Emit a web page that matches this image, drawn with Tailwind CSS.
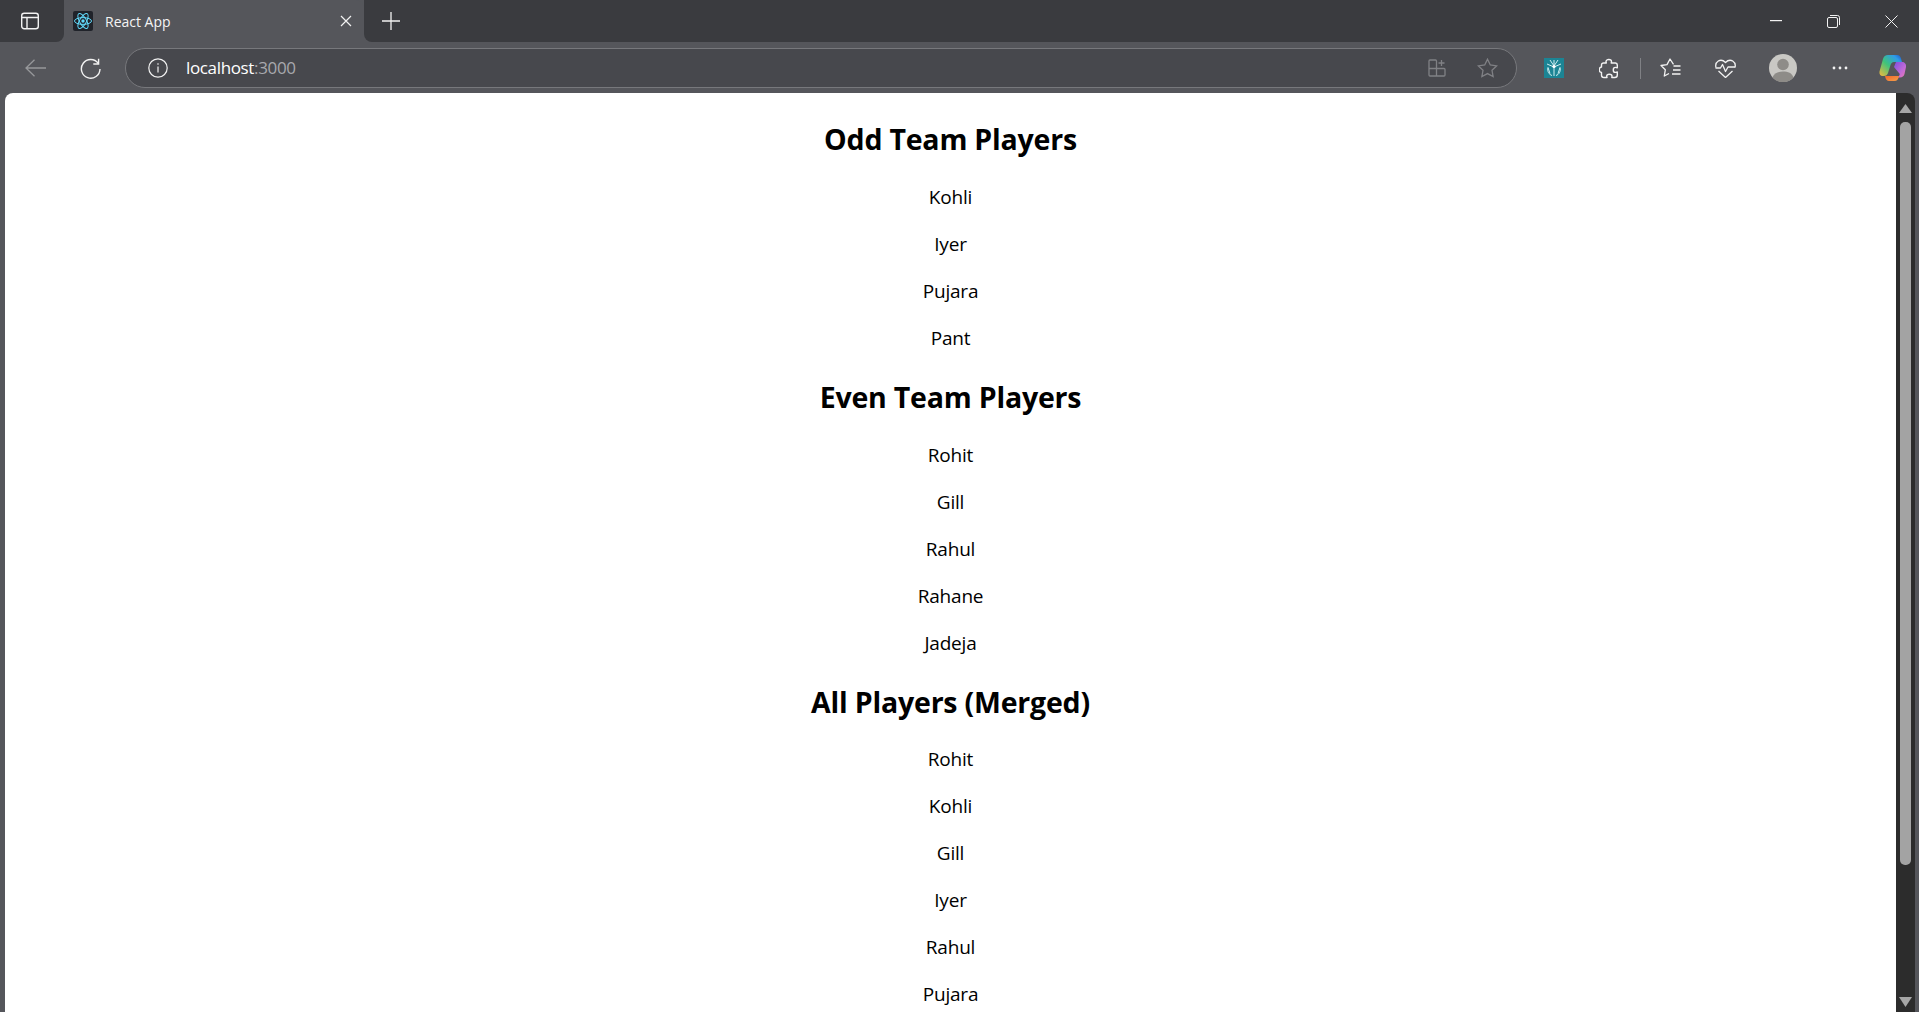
<!DOCTYPE html>
<html lang="en">
<head>
    <meta charset="UTF-8">
    <title>React App</title>
    <script src="https://cdn.jsdelivr.net/npm/@tailwindcss/browser@4"></script>
</head>
<body class="h-screen overflow-hidden bg-[#55565b] font-['Open_Sans',sans-serif]">
    <!-- Tab strip -->
    <div class="flex h-[42px] bg-[#55565b]">
        <div class="w-[64px] flex items-center justify-center pr-[4px] bg-[#3a3b3f] rounded-br-lg">
            <svg class="w-[20px] h-[20px]" viewBox="0 0 20 20" fill="none" stroke="#f2f2f2" stroke-width="1.4"><rect x="1.7" y="2.2" width="16.6" height="15.6" rx="2.5"/><path d="M2 6.5h16M7 6.5v11"/></svg>
        </div>
        <div class="w-[300px] flex items-center bg-[#55565b] rounded-t-lg pl-[9px] pr-[12px]">
            <svg class="w-[20px] h-[20px] shrink-0" viewBox="0 0 20 20"><rect width="20" height="20" rx="2" fill="#20232a"/><g fill="none" stroke="#61dafb" stroke-width="1"><ellipse cx="10" cy="10" rx="8.5" ry="3.4"/><ellipse cx="10" cy="10" rx="8.5" ry="3.4" transform="rotate(60 10 10)"/><ellipse cx="10" cy="10" rx="8.5" ry="3.4" transform="rotate(120 10 10)"/></g><circle cx="10" cy="10" r="1.7" fill="#61dafb"/></svg>
            <span class="ml-[12px] text-[14px] text-[#f4f4f5] flex-1">React App</span>
            <svg class="w-[12px] h-[12px]" viewBox="0 0 12 12" stroke="#f2f2f2" stroke-width="1.2"><path d="M1 1l10 10M11 1L1 11"/></svg>
        </div>
        <div class="flex-1 flex items-center bg-[#3a3b3f] rounded-bl-lg">
            <svg class="ml-[18px] w-[18px] h-[18px]" viewBox="0 0 18 18" stroke="#f2f2f2" stroke-width="1.3"><path d="M9 0v18M0 9h18"/></svg>
            <div class="ml-auto flex items-center">
                <div class="w-[57px] flex justify-center pr-[1px]"><svg class="w-[12px] h-[2px]" viewBox="0 0 12 2"><rect width="12" height="1.2" fill="#f2f2f2"/></svg></div>
                <div class="w-[58px] flex justify-center pr-[1px]"><svg class="w-[13px] h-[13px]" viewBox="0 0 13 13" fill="none" stroke="#f2f2f2" stroke-width="1"><rect x="0.5" y="2.5" width="10" height="10" rx="1.5"/><path d="M3 .5h7.5a2 2 0 0 1 2 2V10"/></svg></div>
                <div class="w-[56px] flex justify-center"><svg class="w-[13px] h-[13px]" viewBox="0 0 13 13" stroke="#f2f2f2" stroke-width="1"><path d="M.5.5l12 12M12.5.5l-12 12"/></svg></div>
            </div>
        </div>
    </div>

    <!-- Toolbar -->
    <div class="flex items-center h-[51px] pt-[1px] pr-[4px]">
        <div class="ml-[14px] w-[42px] flex justify-center">
            <svg class="w-[21px] h-[18px]" viewBox="0 0 21 18" fill="none" stroke="#97989b" stroke-width="1.3"><path d="M21 9H1M9.5.8L1 9l8.5 8.2"/></svg>
        </div>
        <div class="ml-[13px] w-[42px] flex justify-center">
            <svg class="w-[21px] h-[21px]" viewBox="0 0 21 21" fill="none" stroke="#f2f2f2" stroke-width="1.4"><path d="M18.3 5.5A9.3 9.3 0 1 0 20 11"/><path d="M18.6.8v5.2h-5.3"/></svg>
        </div>
        <div class="ml-[14px] flex-1 h-[40px] flex items-center rounded-[20px] border border-[#77787c] bg-[#47484d]">
            <svg class="ml-[22px] w-[20px] h-[20px]" viewBox="0 0 20 20" fill="none" stroke="#f2f2f2" stroke-width="1.2"><circle cx="10" cy="10" r="9.2"/><path d="M10 8.6v6M10 5.2v1.6"/></svg>
            <span class="ml-[18px] text-[17px] tracking-[-0.35px] text-white">localhost<span class="text-[#a8a9ad]">:3000</span></span>
            <svg class="ml-auto w-[18px] h-[18px]" viewBox="0 0 18 18" fill="none" stroke="#808185" stroke-width="1.3"><path d="M1 9.5h7.5V2a1 1 0 0 0-1-1H2a1 1 0 0 0-1 1zM1 9.5V16a1 1 0 0 0 1 1h5.5a1 1 0 0 0 1-1V9.500zM8.500 9.500H16a1 1 0 0 1 1 1V16a1 1 0 0 1-1 1H8.500M13.500 1v6M10.500 4h6"/></svg>
            <svg class="ml-[31px] mr-[18px] w-[21px] h-[20px]" viewBox="0 0 21 20" fill="none" stroke="#808185" stroke-width="1.3"><path d="M10.500 1.200l2.800 5.800 6.300.9-4.600 4.400 1.100 6.300-5.600-3-5.600 3 1.100-6.300-4.600-4.400 6.300-.9z"/></svg>
        </div>
        <div class="ml-[15px] w-[44px] flex justify-center">
            <svg class="w-[20px] h-[20px]" viewBox="0 0 20 20"><rect width="20" height="20" fill="#1c8494"/><g fill="none" stroke="#cfeef0" stroke-width="1"><path d="M10 2v16M6 2l4 6 4-6M3 6l7 3 7-3M4 9.500c-1 4 1 7 4 8M16 9.500c1 4-1 7-4 8M4 9.500l2 6M16 9.500l-2 6"/></g><circle cx="10" cy="8.500" r="1.600" fill="#fff"/></svg>
        </div>
        <div class="ml-[11px] w-[44px] flex justify-center">
            <svg class="w-[20px] h-[21px]" viewBox="0 0 20 21" fill="none" stroke="#f2f2f2" stroke-width="1.4" stroke-linejoin="round"><path d="M7 3.500C7 .8 12.500 .8 12.500 3.500c0 .8-.3 1-.3 1.500h4.300a2 2 0 0 1 1.800 2v2.800c-.6 0-1-.4-2-.4-2.700 0-2.700 5 0 5 1 0 1.400-.4 2-.4V17a2.500 2.500 0 0 1-2.500 2.500h-3c0-.5.200-.7.200-1.300 0-2.700-5.300-2.700-5.300 0 0 .6.300.8.300 1.300H5a2.500 2.500 0 0 1-2.500-2.500v-2.600c-3-.2-3-5.200 0-5.400V7a2 2 0 0 1 2-2h2.800c0-.5-.3-.7-.3-1.500z"/></svg>
        </div>
        <div class="ml-[9px] w-[1px] h-[21px] bg-[#808185]"></div>
        <div class="ml-[7px] w-[44px] flex justify-center">
            <svg class="w-[21px] h-[20px]" viewBox="0 0 21 20" fill="none" stroke="#f2f2f2" stroke-width="1.3" stroke-linejoin="round"><path d="M13.500 6.300L10 1 7 6.600l-6 .9 4.300 4.300-1 6.200 4.700-2.500"/><path d="M13.500 8h7M13 12h7.500M12 16h8.500"/></svg>
        </div>
        <div class="ml-[11px] w-[44px] flex justify-center">
            <svg class="w-[21px] h-[20px]" viewBox="0 0 21 20" fill="none" stroke="#f2f2f2" stroke-width="1.3" stroke-linejoin="round"><path d="M1 9.500C-.5 4 5.500-.5 10.500 4.500 15.500-.5 21.500 4 20 9.500M3.500 13l7 6.500 7-6.500"/><path d="M.5 10h5l2-3.500 3 7 2.500-4.500h7"/></svg>
        </div>
        <div class="ml-[14px] w-[44px] flex justify-center">
            <svg class="w-[28px] h-[28px]" viewBox="0 0 28 28"><circle cx="14" cy="14" r="14" fill="#c9c8c4"/><circle cx="14" cy="10.500" r="5.800" fill="#8e8c88"/><path d="M3.500 23.500C5 19 9 17.500 14 17.500s9 1.500 10.500 6A14 14 0 0 1 3.500 23.500z" fill="#8e8c88"/></svg>
        </div>
        <div class="ml-[13px] w-[44px] flex justify-center">
            <svg class="w-[16px] h-[4px]" viewBox="0 0 16 4" fill="#f2f2f2"><circle cx="2" cy="2" r="1.400"/><circle cx="8" cy="2" r="1.400"/><circle cx="14" cy="2" r="1.400"/></svg>
        </div>
        <div class="ml-[9px] w-[44px] flex justify-center">
            <svg class="w-[28px] h-[28px]" viewBox="0 0 28 28">
                <defs>
                    <linearGradient id="cpA" x1="0" y1="1" x2="1" y2="0"><stop offset="0" stop-color="#f5b83d"/><stop offset="0.45" stop-color="#3fc47a"/><stop offset="0.8" stop-color="#2f9be8"/><stop offset="1" stop-color="#1c4fc4"/></linearGradient>
                    <linearGradient id="cpB" x1="0" y1="0" x2="1" y2="1"><stop offset="0" stop-color="#7d4fe0"/><stop offset="0.6" stop-color="#c06ad8"/><stop offset="1" stop-color="#ee7ab0"/></linearGradient>
                    <linearGradient id="cpC" x1="0" y1="0" x2="1" y2="1"><stop offset="0" stop-color="#f2682a"/><stop offset="1" stop-color="#f4a04a"/></linearGradient>
                </defs>
                <path d="M9 1h9c2.500 0 3.500 1.800 4 3.500l1 3.500H15c-2 0-3 1.500-3.500 3L9 19c-.6 1.800-2 3-4 3H3.500C1.500 22 0 20 .5 17.500L4 5C4.800 2.500 6.500 1 9 1z" fill="url(#cpA)"/>
                <path d="M17 8h6c2.500 0 4.500 2 4 5l-1.500 7c-.5 2.200-2.200 3.500-4.500 3.500h-4c2 0 3.300-1.500 3.800-3.500L15 13z" fill="url(#cpB)"/>
                <path d="M6 22h10l4 0c-.5 3-2 5-4.500 5H10c-2 0-3.500-1.500-4-5z" fill="url(#cpC)"/>
            </svg>
        </div>
    </div>

    <!-- Page area -->
    <div class="flex h-[919px] pl-[5px] pr-[4px]">
        <div class="flex-1 overflow-hidden bg-white rounded-tl-lg text-center text-black text-[19px] leading-[27px] tracking-[-0.2px]">
            <h2 class="mt-[26px] mb-[25px] text-[28.5px] leading-[40px] font-bold">Odd Team Players</h2>
            <p class="mb-[20px]">Kohli</p>
            <p class="mb-[20px]">Iyer</p>
            <p class="mb-[20px]">Pujara</p>
            <p>Pant</p>
            <h2 class="mt-[25px] mb-[25px] text-[28.5px] leading-[40px] font-bold">Even Team Players</h2>
            <p class="mb-[20px]">Rohit</p>
            <p class="mb-[20px]">Gill</p>
            <p class="mb-[20px]">Rahul</p>
            <p class="mb-[20px]">Rahane</p>
            <p>Jadeja</p>
            <h2 class="mt-[25px] mb-[24px] text-[28.5px] leading-[40px] font-bold">All Players (Merged)</h2>
            <p class="mb-[20px]">Rohit</p>
            <p class="mb-[20px]">Kohli</p>
            <p class="mb-[20px]">Gill</p>
            <p class="mb-[20px]">Iyer</p>
            <p class="mb-[20px]">Rahul</p>
            <p class="mb-[20px]">Pujara</p>
        </div>
        <!-- Scrollbar -->
        <div class="w-[19px] flex flex-col items-center bg-[#2c2c2c] rounded-tr-lg">
            <svg class="mt-[11px] w-[13px] h-[9px] shrink-0" viewBox="0 0 13 9"><path d="M6.500 0L13 9H0z" fill="#a6a6a6"/></svg>
            <div class="mt-[9px] w-[11px] h-[743px] shrink-0 rounded-[5px] bg-[#a3a3a3]"></div>
            <svg class="mt-[132px] w-[13px] h-[10px] shrink-0" viewBox="0 0 13 10"><path d="M0 0h13L6.500 10z" fill="#a6a6a6"/></svg>
        </div>
    </div>
</body>
</html>
